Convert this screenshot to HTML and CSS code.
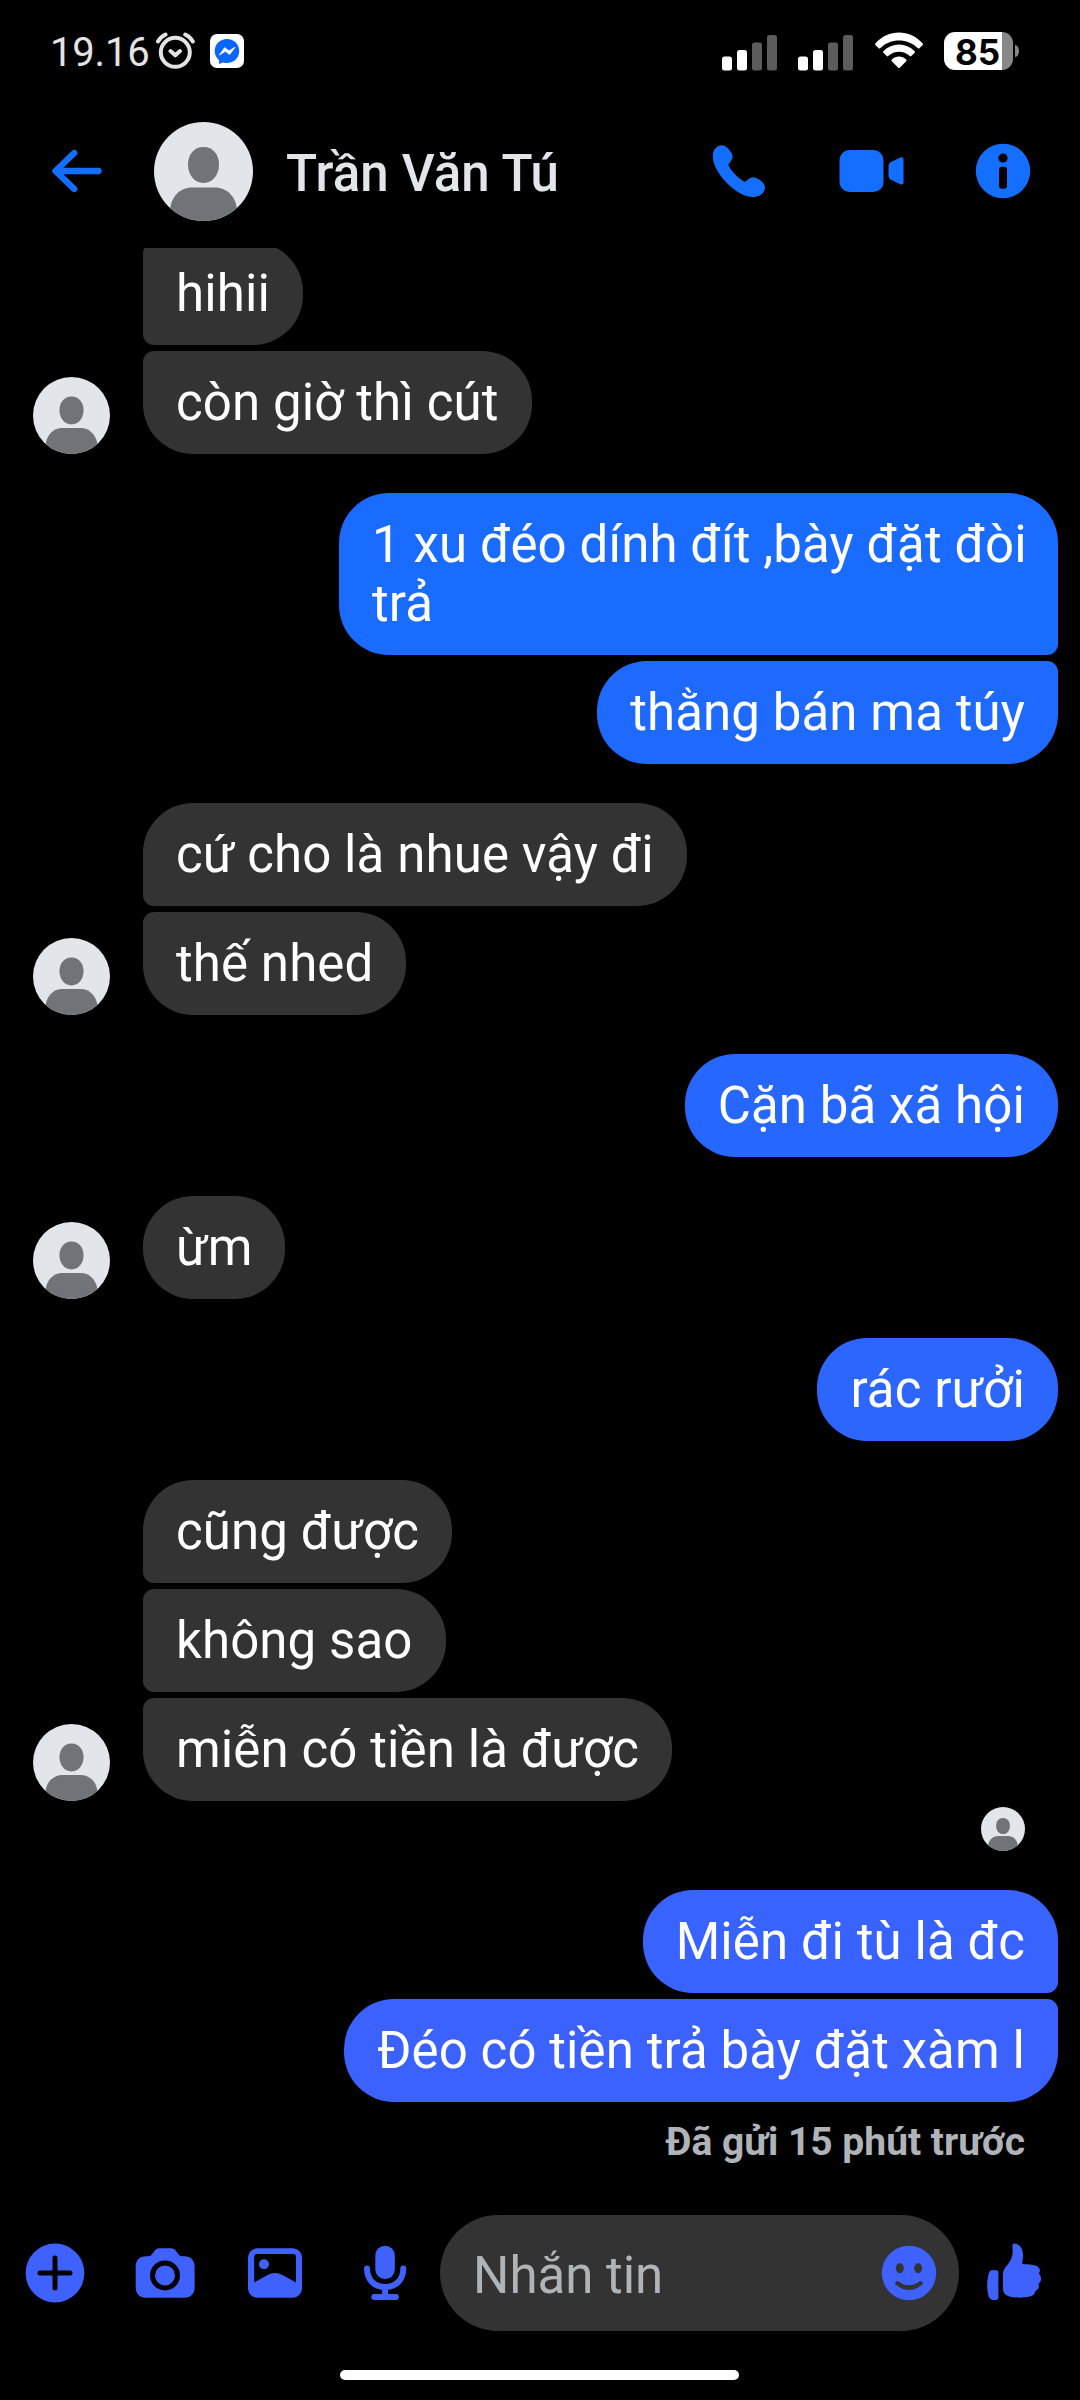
FILE: index.html
```html
<!DOCTYPE html>
<html lang="vi">
<head>
<meta charset="utf-8">
<title>Trần Văn Tú</title>
<link rel="stylesheet" href="styles.css">
</head>
<body>
<svg class="defs" aria-hidden="true">
  <defs>
    <clipPath id="round"><circle cx="49.5" cy="49.5" r="49.5"/></clipPath>
    <symbol id="person" viewBox="0 0 99 99">
      <g clip-path="url(#round)">
        <rect width="99" height="99" fill="#e2e5ea"/>
        <path d="M49.5 25c9.4 0 15.500 7.500 15.500 17.500S59 61 49.500 61 34 52.500 34 42.500 40.100 25 49.500 25z" fill="#707378"/>
        <path d="M16 90C16 75 26 65.500 38 65.500h23C73 65.500 83 75 83 90v12H16z" fill="#707378"/>
      </g>
    </symbol>
    <symbol id="signal" viewBox="0 0 55 36">
      <rect x="0" y="21.500" width="10" height="14" rx="2.500" fill="#fff"/>
      <rect x="15" y="15" width="10" height="20.500" rx="2.500" fill="#fff"/>
      <rect x="30" y="7.500" width="10" height="28" rx="2.500" fill="#5c5c5c"/>
      <rect x="45" y="0" width="10" height="35.500" rx="2.500" fill="#5c5c5c"/>
    </symbol>
  </defs>
</svg>

<div class="status">
  <span class="clock">19.16</span>
  <svg class="alarm" width="40" height="38" viewBox="155 32 40 38" fill="none" stroke="#e4e4e4" stroke-width="4" stroke-linecap="round" stroke-linejoin="round">
    <circle cx="175.300" cy="52.300" r="14.500"/>
    <path d="M170.500 51l4.800 4.300 4.700-4.300M158 41.500q2.500-4.500 7.500-7M192.800 41.500q-2.500-4.500-7.500-7"/>
  </svg>
  <svg class="messenger" width="34" height="34" viewBox="0 0 34 34">
    <rect width="34" height="34" rx="7" fill="#fff"/>
    <path d="M17 5c7 0 12.200 5.200 12.200 12S24 29 17 29c-1.500 0-2.500-.2-3.800-.6L9 30v-4C6.300 23.800 4.700 20.700 4.700 17 4.700 10.200 10 5 17 5z" fill="#0a66ff"/>
    <path d="M9.300 21l5.400-7.300 4.300 3.200 6-3.600-5.300 7.200-4.300-3.200z" fill="#fff" stroke="#fff" stroke-width=".8" stroke-linejoin="round"/>
  </svg>
  <div class="status-right">
    <svg width="55" height="36"><use href="#signal"/></svg>
    <svg width="55" height="36"><use href="#signal"/></svg>
    <svg class="wifi" width="50" height="38" viewBox="874 32 50 38" fill="#fff">
      <path d="M875.300 43.500C888 28.800 910 28.800 922.700 43.500q.6.800 0 1.500l-3.300 3.300q-.8.600-1.500 0C907.500 38 890.500 38 880.200 48.300q-.8.600-1.500 0l-3.400-3.300q-.6-.7 0-1.500z"/>
      <path d="M883.300 51.300c8.800-9 22.600-9 31.400 0q.5.700 0 1.400l-3.400 3.400q-.8.600-1.500 0c-6-5.800-15.500-5.800-21.600 0q-.8.600-1.500 0l-3.400-3.400q-.5-.7 0-1.400z"/>
      <path d="M891.600 59.700c4.200-4.200 10.600-4.200 14.800 0q.5.700 0 1.400l-6.600 6.600q-.8.600-1.600 0l-6.600-6.600q-.5-.7 0-1.400z"/>
    </svg>
    <div class="battery"><span class="level">85</span><i class="nub"></i></div>
  </div>
</div>

<header class="header">
  <svg class="back" width="54" height="54" viewBox="50 144 54 54" fill="none" stroke="#146eff" stroke-width="6.300" stroke-linecap="round" stroke-linejoin="round">
    <path d="M74.200 153L55.500 171l18.700 18M56 171h42.500"/>
  </svg>
  <svg class="photo" width="99" height="99"><use href="#person"/></svg>
  <h1 class="name">Trần Văn Tú</h1>
  <svg class="call" width="54" height="54" viewBox="712 144 54 54" fill="#146eff">
    <path d="M721.500 145.200c3.200-.2 5.200 1.600 7.200 4 2.200 2.700 4 5.200 3.900 7.500 0 3.100-2.600 4.700-4.300 8.300 1.600 3.500 3.700 6 6.700 9.200 3 3.100 6.200 5.500 9.600 7.700 3.300-1.400 5.100-4.700 8.700-4.700 3.100 0 6.100 2.200 8.700 4.600 2 1.900 3.100 3.800 2.900 6.300-.5 5-5 8.900-12.500 8.900-6.500-.1-15-4.200-23.500-12-9-8.400-16.100-19.800-16.100-28.500 0-6.700 3.600-11 8.700-11.300z"/>
  </svg>
  <svg class="video" width="65" height="44" viewBox="838.500 149 65 44" fill="#146eff">
    <rect x="839" y="150" width="44" height="42" rx="10"/>
    <path d="M888 166q0-2.500 2-3.700l9.800-4.700q3.200-1.200 3.200 1.800v23q0 3-3.200 1.800L890 179.500q-2-1.200-2-3.700z"/>
  </svg>
  <svg class="info" width="56" height="56" viewBox="-28 -28 56 56">
    <circle r="27.200" fill="#146eff"/>
    <circle cy="-13" r="4.600" fill="#000"/>
    <rect x="-4" y="-4.300" width="8" height="22" rx="3" fill="#000"/>
  </svg>
</header>

<main class="chat">
  <section class="group in">
    <svg class="avatar" width="77" height="77"><use href="#person"/></svg>
    <div class="stack"><p class="bubble continued">hihii</p><p class="bubble">còn giờ thì cút</p></div>
  </section>
  <section class="group out">
    <div class="stack"><p class="bubble tone1">1 xu đéo dính đít ,bày đặt đòi trả</p><p class="bubble tone2">thằng bán ma túy</p></div>
  </section>
  <section class="group in">
    <svg class="avatar" width="77" height="77"><use href="#person"/></svg>
    <div class="stack"><p class="bubble">cứ cho là nhue vậy đi</p><p class="bubble">thế nhed</p></div>
  </section>
  <section class="group out">
    <div class="stack"><p class="bubble tone3">Cặn bã xã hội</p></div>
  </section>
  <section class="group in">
    <svg class="avatar" width="77" height="77"><use href="#person"/></svg>
    <div class="stack"><p class="bubble">ừm</p></div>
  </section>
  <section class="group out">
    <div class="stack"><p class="bubble tone4">rác rưởi</p></div>
  </section>
  <section class="group in">
    <svg class="avatar" width="77" height="77"><use href="#person"/></svg>
    <div class="stack"><p class="bubble">cũng được</p><p class="bubble">không sao</p><p class="bubble">miễn có tiền là được</p></div>
  </section>
  <div class="seen"><svg width="44" height="44"><use href="#person"/></svg></div>
  <section class="group out">
    <div class="stack"><p class="bubble tone5">Miễn đi tù là đc</p><p class="bubble tone6">Đéo có tiền trả bày đặt xàm l</p></div>
  </section>
  <p class="sent">Đã gửi 15 phút trước</p>
</main>

<footer class="composer">
  <svg class="tool" width="60" height="60" viewBox="-30 -30 60 60">
    <circle r="29.400" fill="#3f62ff"/>
    <path d="M-15 0H15M0-15V15" stroke="#000" stroke-width="5" stroke-linecap="round"/>
  </svg>
  <svg class="tool" width="60" height="60" viewBox="135 2243 60 60">
    <path d="M146 2256.300h2c2.500 0 3.500-1.300 5-3.300 2-2.700 3.500-4.700 7-4.700h10.500c3.500 0 5 2 7 4.700 1.500 2 2.500 3.300 5 3.300h2c6 0 10.100 4 10.100 10v21.400c0 6-4.100 10-10.100 10h-38.700c-6 0-10.100-4-10.100-10v-21.400c0-6 4.100-10 10.300-10z" fill="#3f62ff"/>
    <circle cx="165" cy="2275.400" r="12.500" fill="#3f62ff" stroke="#000" stroke-width="5"/>
  </svg>
  <svg class="tool" width="60" height="60" viewBox="245 2243 60 60">
    <rect x="248" y="2248.300" width="54" height="49.400" rx="9.500" fill="#3f62ff"/>
    <path d="M257 2254h36q3 0 3 3v25.500l-13.500-7.500q-7.500-4-15 0l-13.300 7.500V2257q0-3 2.800-3z" fill="#000"/>
    <circle cx="264" cy="2264.300" r="5" fill="#3f62ff"/>
  </svg>
  <svg class="tool" width="60" height="60" viewBox="355 2243 60 60">
    <rect x="375.300" y="2245.700" width="19.500" height="33.500" rx="9.750" fill="#3f62ff"/>
    <path d="M367 2268.500c0 12 8 18.500 18.100 18.500s18.200-6.500 18.200-18.500M385.100 2288v9M374.300 2297h21.600" fill="none" stroke="#3f62ff" stroke-width="6" stroke-linecap="round"/>
  </svg>
  <div class="field">
    <span class="hint">Nhắn tin</span>
    <svg width="56" height="56" viewBox="-28 -28 56 56">
      <circle r="27.200" fill="#3f62ff"/>
      <ellipse cx="-9.200" cy="-4.800" rx="4" ry="5" fill="#333"/>
      <ellipse cx="9.200" cy="-4.800" rx="4" ry="5" fill="#333"/>
      <path d="M-11.500 10.300Q0 19 11.500 10.300" fill="none" stroke="#333" stroke-width="4.500" stroke-linecap="round"/>
    </svg>
  </div>
  <svg class="like" width="56" height="60" viewBox="986 2243 56 60" fill="#3f62ff">
    <path d="M991.500 2270.300h4.600q2.300 0 2.300 2.300v24.900q0 2.400-2.300 2.400h-3.600q-2.600 0-3.600-2.900c-2.300-7-2.300-16 0-24q.8-2.700 2.600-2.700z"/>
    <path d="M1012.400 2245.400c.3-2.200 2.800-2.300 5-1.200 4.600 2.400 5.800 7.400 5.600 11.500-.1 3.300-.7 5.500-.8 8.300 4 .3 8.300.1 12 1.300 3.600.9 5.700 2.700 5.700 5 .2 1.400-.5 2.500-1.200 3.300 1.500 1.500 2.400 3.400 2.400 5.400-.1 2-1.100 3.500-2.500 4.500.5 1.300.5 3-.1 4.400-.7 1.700-2 2.800-3.500 3.300.3 2.700-1.800 4.700-5.500 5.400-6.500 1.500-15.500 1.500-21.500-.7-3.500-1.300-5.100-3.800-5.100-7.600V2275c0-5.700 3.600-8.500 6.600-13 2.600-4 3.200-7.400 3.200-11 0-2.200-.4-3.600-.3-5.600z"/>
  </svg>
</footer>
<div class="home"></div>
</body>
</html>
```
FILE: styles.css
```css
* { box-sizing: border-box; margin: 0; padding: 0; }

body {
  width: 1080px;
  height: 2400px;
  background: #000;
  color: #fff;
  font-family: Roboto, "Noto Sans", sans-serif;
  display: flex;
  flex-direction: column;
  overflow: hidden;
}

svg { display: block; flex: none; }
.defs { position: absolute; width: 0; height: 0; }

/* Status bar */
.status {
  height: 102px;
  padding: 0 61px 0 50px;
  display: flex;
  align-items: center;
}
.clock {
  width: 105px;
  padding-top: 3px;
  font-size: 40px;
  line-height: 46px;
  letter-spacing: -.2px;
  color: #e4e4e4;
}
.messenger { margin-left: 15px; }
.status-right { margin-left: auto; display: flex; align-items: center; }
.status-right svg { margin-right: 21px; margin-top: 3px; }
.status-right .wifi { margin: 0 20px 0 0; }
.battery {
  position: relative;
  width: 69px;
  height: 38px;
  margin-right: 6px;
  border-radius: 11px;
  background: linear-gradient(90deg, #fff 0 58.500px, #888 58.500px);
}
.level {
  display: block;
  padding-left: 11px;
  font: 700 35px/40px Inter, sans-serif;
  color: #000;
}
.nub {
  position: absolute;
  left: 71px;
  top: 13px;
  width: 4px;
  height: 12px;
  border-radius: 0 4px 4px 0 / 0 6px 6px 0;
  background: #888;
}

/* Conversation header */
.header {
  height: 146px;
  padding: 0 49px 8px 50px;
  display: flex;
  align-items: center;
}
.photo { margin-left: 50px; }
.name {
  flex: 1;
  margin-left: 33px;
  padding-top: 6px;
  font-size: 51px;
  font-weight: 500;
  line-height: 60px;
  letter-spacing: .15px;
  color: #e2e5ea;
  white-space: nowrap;
}
.video { margin-left: 73px; }
.info { margin-left: 71px; }

/* Messages */
.chat {
  height: 1943px;
  overflow: hidden;
  display: flex;
  flex-direction: column;
  justify-content: flex-end;
  gap: 39px;
  padding: 0 22px 26px 33px;
}
.group { display: flex; align-items: flex-end; flex: none; }
.group.out { justify-content: flex-end; }
.stack { display: flex; flex-direction: column; gap: 6px; }
.in .stack { margin-left: 33px; align-items: flex-start; }
.out .stack { align-items: flex-end; }
.bubble {
  max-width: 719px;
  padding: 22px 33px;
  border-radius: 50px;
  background: #333;
  font-size: 51px;
  line-height: 59px;
  letter-spacing: .1px;
}
.in .bubble:not(:last-child) { border-bottom-left-radius: 11px; }
.in .bubble:not(:first-child), .in .continued { border-top-left-radius: 11px; }
.out .bubble:not(:last-child) { border-bottom-right-radius: 11px; }
.out .bubble:not(:first-child) { border-top-right-radius: 11px; }
.tone1 { background: #196cff; padding-right: 26px; }
.tone2 { background: #1e6aff; }
.tone3 { background: #2668ff; }
.tone4 { background: #2c66ff; }
.tone5 { background: #3863ff; }
.tone6 { background: #3b62ff; }

.seen {
  display: flex;
  justify-content: flex-end;
  margin-top: -33px;
  padding-right: 33px;
}
.sent {
  margin-top: -22px;
  padding-right: 33px;
  text-align: right;
  font-size: 39px;
  font-weight: 700;
  line-height: 46px;
  color: #b0b3b8;
}

/* Composer */
.composer {
  height: 164px;
  padding: 0 38px 0 25px;
  display: flex;
  align-items: center;
}
.tool { margin-right: 50px; }
.field {
  width: 519px;
  height: 116px;
  margin-left: -25px;
  padding: 0 22px 0 33px;
  border-radius: 58px;
  background: #333;
  display: flex;
  align-items: center;
  justify-content: space-between;
}
.hint { padding-top: 5px; font-size: 51px; line-height: 60px; color: #b0b3b8; }
.like { margin-left: 27px; }

.home {
  width: 399px;
  height: 10px;
  margin: 15px 0 0 340px;
  border-radius: 5px;
  background: #fff;
}
```
